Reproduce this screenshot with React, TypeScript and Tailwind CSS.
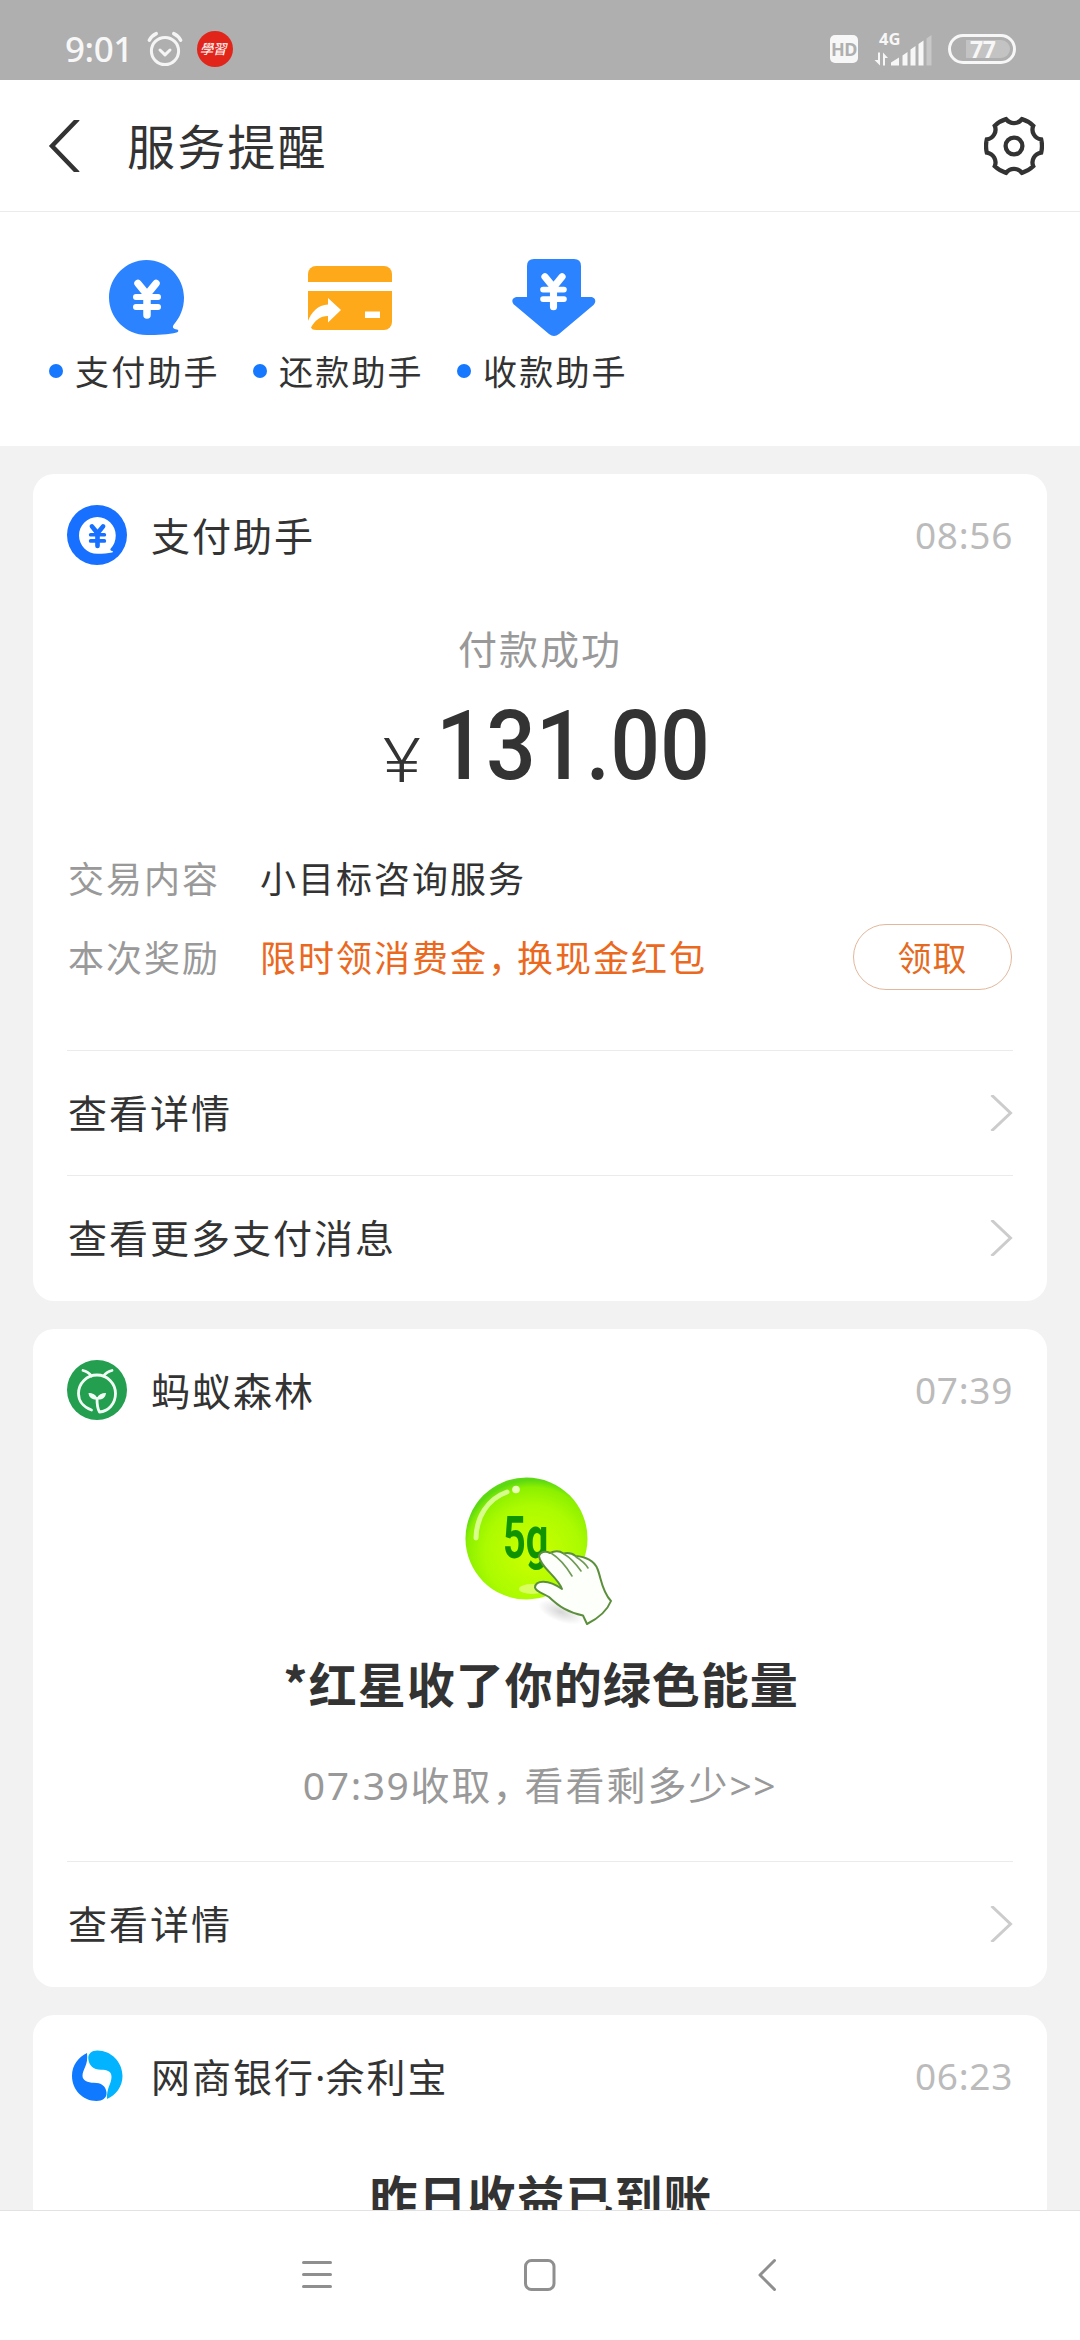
import type { ReactNode } from "react";

type Assistant = { name: string; icon: ReactNode };

function AlarmIcon() {
  return (
    <svg width="36" height="36" viewBox="0 0 36 36" fill="none" stroke="#f5f5f5" strokeLinecap="round">
      <circle cx="18" cy="20" r="13.6" strokeWidth="3" />
      <path d="M13 19l5 4.8 5-4.8" strokeWidth="3" strokeLinejoin="round" />
      <path d="M2.3 9.2C4 6 6.3 4 9.3 2.6M33.7 9.2C32 6 29.7 4 26.7 2.6" strokeWidth="3.4" />
    </svg>
  );
}

function StudyIcon() {
  return (
    <svg width="36" height="36" viewBox="0 0 36 36">
      <circle cx="18" cy="18" r="18" fill="#e1251b" />
      <text
        x="17.5"
        y="23.5"
        textAnchor="middle"
        fill="#fff"
        fontSize="13.5"
        transform="skewX(-14) translate(4.5 0)"
        className="font-['Noto_Sans_CJK_TC',sans-serif]"
      >
        學習
      </text>
    </svg>
  );
}

function SignalIcon() {
  return (
    <svg width="58" height="34" viewBox="0 0 58 34" fill="#f7f7f7" className="overflow-visible">
      <text x="5" y="13" fontSize="16.5" fontWeight="700" className="font-['Noto_Sans',sans-serif]">
        4G
      </text>
      <path d="M4 20.5h2v13L.5 28H4zM9 33.5v-13l5 5.5h-3v7.5z" />
      <path d="M17 33.5v-3l8-5v8zM28.5 33.5V23.5l5-3.500v13.500zM36.5 33.5v-16l5-3.500v19.500zM44.5 33.5v-21.500l5-3.500v25z" />
      <path d="M52.5 33.5V6.5l5-3.500v30.500z" opacity="0.35" />
    </svg>
  );
}

function StatusBar() {
  return (
    <div className="flex h-20 shrink-0 items-center bg-[#afafaf] pt-[18px] pr-16 pl-[65px] font-['Noto_Sans',sans-serif] text-[#f7f7f7]">
      <span className="w-[82px] text-[35px] leading-[36px] font-medium tracking-[-0.4px]">9:01</span>
      <AlarmIcon />
      <span className="ml-[14px]">
        <StudyIcon />
      </span>
      <span className="ml-auto flex h-7 w-7 items-center justify-center rounded-[5px] bg-[#f7f7f7] text-[18px] leading-none font-bold tracking-[-0.5px] text-[#afafaf]">
        HD
      </span>
      <span className="mr-4 ml-4">
        <SignalIcon />
      </span>
      <span className="flex h-[30px] w-[68px] items-center rounded-full border-[3px] border-[#f7f7f7] pl-[15px]">
        <span className="flex h-[18px] w-[44px] items-center rounded-l-[2px] rounded-r-full bg-[#c3c3c3] pl-1 text-[23px] leading-none font-bold tracking-[-0.5px]">
          77
        </span>
      </span>
    </div>
  );
}

function GearIcon() {
  return (
    <svg width="60" height="60" viewBox="-30 -30 60 60" fill="none" stroke="#333" strokeWidth="4.3">
      <path d="M-7.95-26.85A10 10 0 0 0 7.95-26.85A28 28 0 0 1 19.27-20.3A10 10 0 0 0 27.2-6.54A28 28 0 0 1 27.2 6.54A10 10 0 0 0 19.27 20.3A28 28 0 0 1 7.95 26.85A10 10 0 0 0-7.95 26.85A28 28 0 0 1-19.27 20.3A10 10 0 0 0-27.2 6.54A28 28 0 0 1-27.2-6.54A10 10 0 0 0-19.27-20.3A28 28 0 0 1-7.95-26.85z" />
      <circle r="8.4" />
    </svg>
  );
}

function TitleBar() {
  return (
    <header className="flex h-[132px] shrink-0 items-center border-b border-[#ebebeb] bg-white pr-9 pl-12">
      <svg width="32" height="52" viewBox="0 0 32 52" fill="none" stroke="#333" strokeWidth="4.5">
        <path d="M30-1L4 26l26 27" />
      </svg>
      <h1 className="ml-[47px] pb-1 text-[48px] leading-[60px] tracking-[2.2px]">服务提醒</h1>
      <span className="ml-auto">
        <GearIcon />
      </span>
    </header>
  );
}

// Rounded yen sign, centred at 0,0
function Yen({ color }: { color: string }) {
  return (
    <g fill="none" stroke={color} strokeLinecap="round" strokeLinejoin="round">
      <path d="M-9-15.5L0-4.5 9-15.5M0-4.5V16" strokeWidth="7.5" />
      <path d="M-11-2H11M-11 8H11" strokeWidth="6" />
    </g>
  );
}

// Speech bubble with its tail at the lower right
const BUBBLE = "M37.5 0C58 0 75 17 75 37.5c0 11-4 20-10.5 27.5-1.5 2.5 0 4 3.5 4.5 2 .5 1.5 2.5-.5 3C60 74.5 48 75 37.5 75 17 75 0 58 0 37.5S17 0 37.5 0z";

function PayIcon() {
  return (
    <svg width="75" height="76" viewBox="0 0 75 76">
      <path d={BUBBLE} fill="#2b83ff" />
      <g transform="translate(38 39)">
        <Yen color="#fff" />
      </g>
    </svg>
  );
}

function RepayIcon() {
  return (
    <svg width="84" height="64" viewBox="0 0 84 64">
      <path d="M0 16V8a8 8 0 0 1 8-8h68a8 8 0 0 1 8 8v8z" fill="#fea91a" />
      <path d="M0 25h84v31a8 8 0 0 1-8 8H8q-4 0-5-2.5c4-7 9-11.5 17-11.5v6.5L33 44 20 32v6.5C10 38.5 3 47 0 55z" fill="#fea91a" />
      <path d="M57 45.500h15v6.500H57z" fill="#fff" />
    </svg>
  );
}

function CollectIcon() {
  return (
    <svg width="84" height="78" viewBox="0 0 84 78">
      <path
        d="M22 0h40q7 0 7 7v31h9c6 0 6.500 5 3.500 8L47 75q-5 4-10 0L2.500 46c-3.500-3-3-8 3.500-8h9V7q0-7 7-7z"
        fill="#2b83ff"
      />
      <g transform="translate(41.5 32.5) scale(0.95)">
        <Yen color="#fff" />
      </g>
    </svg>
  );
}

const assistants: Assistant[] = [
  { name: "支付助手", icon: <PayIcon /> },
  { name: "还款助手", icon: <RepayIcon /> },
  { name: "收款助手", icon: <CollectIcon /> },
];

function AssistantRow() {
  return (
    <div className="flex h-[234px] shrink-0 bg-white pt-[46px] pl-[49px]">
      {assistants.map((a) => (
        <div key={a.name} className="w-[204px]">
          <div className="ml-[27px] flex h-20 w-[140px] items-center justify-center">{a.icon}</div>
          <div className="mt-3 flex h-[42px] items-center">
            <span className="h-[14px] w-[14px] rounded-full bg-[#1677ff]" />
            <span className="ml-3 text-[34px] leading-[42px] tracking-[2.2px]">{a.name}</span>
          </div>
        </div>
      ))}
    </div>
  );
}

function PayAvatar() {
  return (
    <svg width="60" height="60" viewBox="0 0 60 60">
      <circle cx="30" cy="30" r="30" fill="#1770ff" />
      <path d={BUBBLE} fill="#fff" transform="translate(12 12) scale(0.49)" />
      <g transform="translate(30.5 31) scale(0.62)">
        <Yen color="#1770ff" />
      </g>
    </svg>
  );
}

function ForestAvatar() {
  return (
    <svg width="60" height="60" viewBox="0 0 60 60" fill="none" stroke="#f2fff6" strokeLinecap="round" strokeLinejoin="round">
      <circle cx="30" cy="30" r="30" fill="#239f4f" stroke="none" />
      <path d="M24.5 50C16 47 11.5 40.5 11.5 33.5a18.5 18.5 0 0 1 37 0C48.5 44 41 51.5 32.5 52 30 48 30 44 30 38.5" strokeWidth="2.8" />
      <path d="M16 10.500q5 1 8.500 5.500M45 10.500q-5 1-8.500 5.500" strokeWidth="2.8" />
      <path d="M30 39.500c-5 .5-8-2-8.500-6.500 4 0 7.500 1.500 8.500 5 1.500-3.500 4.500-5 9-5-.5 5-4 7-9 6.500z" fill="#f2fff6" stroke="none" />
    </svg>
  );
}

function BankAvatar() {
  return (
    <svg width="60" height="60" viewBox="0 0 60 60">
      <path
        d="M20 7C11.500 11 5 19 5 30c0 14 11 25 24.500 25 6 0 10.500-3 10-8.500C39 40 34 36.800 27 36.800c-6.500 0-11.500-2.300-11.500-7C15.500 23 21.500 19.500 20 7z"
        fill="#0f79ff"
      />
      <path
        d="M40 53C49 49 55.500 40.500 55.500 30 55.500 16 44 4.500 30.500 4.500 24.500 4.500 21 8 21.300 12.500c.5 7 5 11 12.700 11.300 6 0 10.500 1.500 10.500 7C44.500 38 39.500 41.500 40 53z"
        fill="#02b4ff"
      />
    </svg>
  );
}

function EnergyBubble() {
  return (
    <svg width="152" height="154" viewBox="0 0 152 154">
      <defs>
        <radialGradient id="energy" cx="0.55" cy="0.62" r="0.6">
          <stop offset="0" stopColor="#ccff00" />
          <stop offset="0.65" stopColor="#acfb00" />
          <stop offset="0.9" stopColor="#8cf000" />
          <stop offset="1" stopColor="#5cd912" />
        </radialGradient>
        <radialGradient id="shadow">
          <stop offset="0" stopColor="#000" stopOpacity="0.16" />
          <stop offset="1" stopColor="#000" stopOpacity="0" />
        </radialGradient>
      </defs>
      <ellipse cx="97" cy="137" rx="24" ry="10" fill="url(#shadow)" transform="rotate(20 97 137)" />
      <circle cx="62.5" cy="63.5" r="61" fill="url(#energy)" />
      <path d="M12 63C12.5 42 23.5 24 43 17" fill="none" stroke="#e4ffa5" strokeWidth="5" strokeLinecap="round" opacity="0.85" />
      <circle cx="52" cy="14.5" r="3.8" fill="#eaffb8" />
      <ellipse cx="68" cy="114" rx="13" ry="5" fill="#eaff8a" opacity="0.7" />
      <text
        x="0"
        y="0"
        fill="#0f9400"
        fontSize="60"
        fontWeight="700"
        transform="translate(39 83) scale(0.66 1)"
        className="font-['Roboto',sans-serif]"
      >
        5g
      </text>
      <path
        d="M75 81c1-4 6-5.500 11-3 5-2.500 10-2 13.500.5 5-1 9 0 12 2.500 10 .5 19 5 22 13 3.500 8 4 22 13.500 32-4 10-14 18-24 23l-4-8.500c-15-3-24-9-34-18.500-6-4-13-5-14-9.500C71.500 105 84 104 98 114 94 102 76 92 75 81z"
        fill="#fcfffa"
        stroke="#5c8f3c"
        strokeWidth="2"
        strokeLinejoin="round"
      />
      <path d="M87 78c8 5 15 13 21 23M100 79c7 4 12 10 17 17M112 82c5 3 9 6 12 11" fill="none" stroke="#6f9a55" strokeWidth="1.6" strokeLinecap="round" />
    </svg>
  );
}

function Card({ avatar, name, time, children }: { avatar: ReactNode; name: ReactNode; time: string; children: ReactNode }) {
  return (
    <section className="mx-[33px] mt-7 rounded-[21px] bg-white px-[34px] pt-[31px]">
      <div className="flex h-[60px] items-center">
        {avatar}
        <h2 className="ml-6 pb-[3px] text-[39px] leading-[60px] tracking-[2px]">{name}</h2>
        <time className="ml-auto font-['Noto_Sans',sans-serif] text-[37px] leading-[60px] tracking-[0.7px] text-[#bbb]">{time}</time>
      </div>
      {children}
    </section>
  );
}

function CardLink({ label }: { label: string }) {
  return (
    <div className="flex h-[125px] items-center justify-between border-t border-[#ebebeb]">
      <span className="pb-1 pl-px text-[39px] leading-[60px] tracking-[2px]">{label}</span>
      <svg width="23" height="36" viewBox="0 0 23 36" fill="none" stroke="#ccc" strokeWidth="3">
        <path d="M1.5 0L20.5 18 1.5 36" />
      </svg>
    </div>
  );
}

function NavBar() {
  return (
    <nav className="h-[130px] shrink-0 border-t border-[#e2e2e2] bg-white">
      <svg width="1080" height="129" viewBox="0 2211 1080 129" fill="none" stroke="#8f8f8f" strokeWidth="3" strokeLinecap="round">
        <path d="M303.5 2262.5h27M303.5 2274.5h27M303.5 2286.5h27" />
        <rect x="525.5" y="2260.5" width="28.5" height="29" rx="6" />
        <path d="M774.5 2260.5L760 2275l14.5 14.5" strokeLinejoin="round" />
      </svg>
    </nav>
  );
}

export default function App() {
  return (
    <div className="flex h-[2340px] w-[1080px] flex-col overflow-hidden bg-[#f2f2f2] font-['Noto_Sans_CJK_SC',sans-serif] text-[#333]">
      <StatusBar />
      <TitleBar />
      <AssistantRow />
      <main className="min-h-0 flex-1 overflow-hidden">
        <Card avatar={<PayAvatar />} name="支付助手" time="08:56">
          <p className="mt-14 text-center text-[39px] leading-[52px] tracking-[2px] text-[#999]">付款成功</p>
          <div className="mt-7 flex h-[89px] items-baseline justify-center leading-[90px]">
            <span className="w-[53px] font-['Roboto',sans-serif] text-[62px] font-light">
              <span className="inline-block origin-left translate-y-[3px] scale-x-[1.18]">¥</span>
            </span>
            <span className="w-[262px] font-['Roboto',sans-serif] text-[96px] font-medium">
              <span className="inline-block origin-left scale-x-[0.915]">131.00</span>
            </span>
          </div>
          <div className="mt-[57px] flex h-[60px] items-center text-[36px] tracking-[2px]">
            <span className="w-[193px] pl-px text-[#999]">交易内容</span>
            <span>小目标咨询服务</span>
          </div>
          <div className="mt-[17px] flex h-[66px] items-center text-[36px] tracking-[2px]">
            <span className="w-[193px] pb-[3px] pl-px text-[#999]">本次奖励</span>
            <span className="pb-[3px] text-[#eb6820]">
              限时领消费金<span className="tracking-[-7px]">，</span>换现金红包
            </span>
            <button className="mr-px ml-auto h-[66px] w-[159px] rounded-full border border-[#e3b79b] text-[34px] leading-none tracking-[1px] text-[#e56a21]">
              领取
            </button>
          </div>
          <div className="mt-[60px] pb-px">
            <CardLink label="查看详情" />
            <CardLink label="查看更多支付消息" />
          </div>
        </Card>

        <Card avatar={<ForestAvatar />} name="蚂蚁森林" time="07:39">
          <div className="mt-[55px] flex h-[152px] justify-center">
            <EnergyBubble />
          </div>
          <h3 className="mt-[25px] pl-[2px] text-center text-[48px] leading-[60px] font-bold tracking-[1px]">*红星收了你的绿色能量</h3>
          <p className="mt-[41px] flex h-[60px] items-baseline justify-center text-[39px] leading-[60px] tracking-[2px] text-[#999]">
            <span className="font-['Noto_Sans',sans-serif] tracking-[1.6px]">07:39</span>
            <span>
              收取<span className="tracking-[-7px]">，</span>看看剩多少
            </span>
            <span className="font-['Noto_Sans',sans-serif] tracking-[1.5px]">&gt;&gt;</span>
          </p>
          <div className="mt-12 pb-px">
            <CardLink label="查看详情" />
          </div>
        </Card>

        <Card
          avatar={<BankAvatar />}
          name={
            <>
              网商银行<span className="font-['Noto_Sans',sans-serif] leading-none tracking-[0px]">·</span>余利宝
            </>
          }
          time="06:23"
        >
          <h3 className="mt-[59px] pb-40 pl-[2px] text-center text-[48px] leading-[60px] font-bold tracking-[1px]">昨日收益已到账</h3>
        </Card>
      </main>
      <NavBar />
    </div>
  );
}
